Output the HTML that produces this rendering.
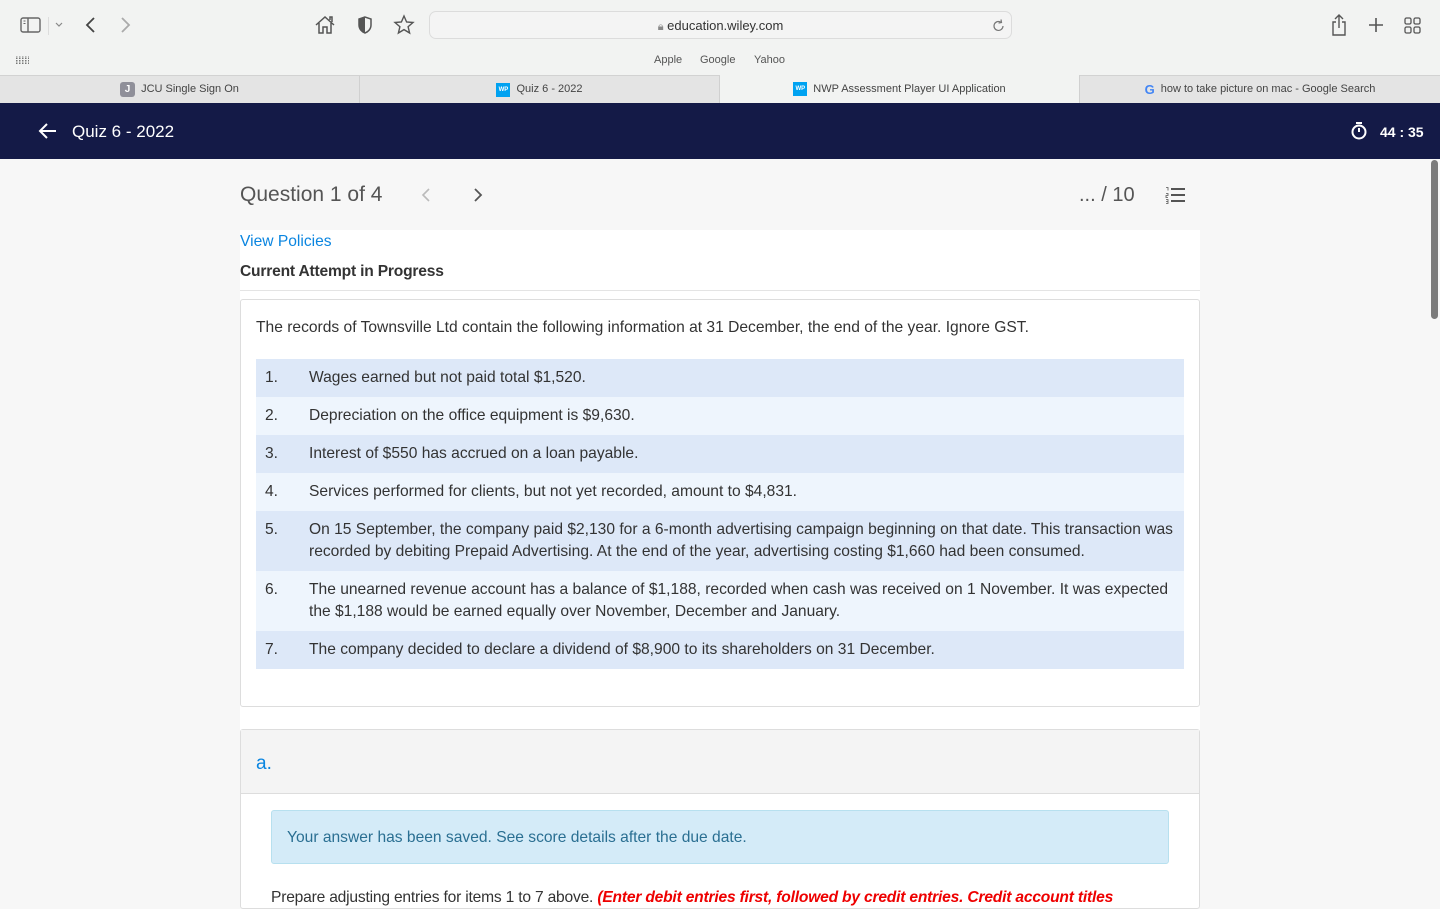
<!DOCTYPE html>
<html><head><meta charset="utf-8"><style>
*{margin:0;padding:0;box-sizing:border-box}
body{width:1440px;height:900px;overflow:hidden;background:#f7f7f7;font-family:"Liberation Sans",sans-serif;position:relative}
.abs{position:absolute}
.toolbar{left:0;top:0;width:1440px;height:75px;background:#f2f3f2}
.url{left:429px;top:11px;width:583px;height:28px;border:1px solid #dcdcdc;border-radius:7px;background:#f4f4f4;font-size:13px;color:#333;text-align:center;line-height:27px}
.bm{top:53px;font-size:11px;color:#555}
.tabs{left:0;top:75px;width:1440px;height:28px;background:#e4e4e4;border-top:1px solid #d2d2d2}
.tab{top:0;height:27px;font-size:11px;color:#444;line-height:27px;display:flex;align-items:center;justify-content:center;border-right:1px solid #d0d0d0}
.wp{display:inline-block;width:14px;height:14px;background:#00a2f1;color:#fff;font-size:6px;font-weight:bold;text-align:center;line-height:14px;margin-right:6px}
.nav{left:0;top:103px;width:1440px;height:56px;background:#141a47;color:#fff}
.q{font-size:15.6px;line-height:1.47;color:#333}
table{border-collapse:collapse;width:928px}
td{vertical-align:top;padding:8px 0 8px 0;font-size:15.6px;color:#333;line-height:22px;white-space:nowrap}
td.n{width:53px;padding-left:9px}
tr:nth-child(odd){background:#dde8f8}
tr:nth-child(even){background:#eef5fd}
</style></head><body>
<div class="abs toolbar"></div>
<svg class="abs" style="left:20px;top:16px" width="22" height="18" viewBox="0 0 22 18"><rect x="1" y="2" width="19" height="14" rx="2" fill="none" stroke="#666" stroke-width="1.4"/><line x1="8" y1="2" x2="8" y2="16" stroke="#666" stroke-width="1.4"/><line x1="3.5" y1="5" x2="5.5" y2="5" stroke="#666"/><line x1="3.5" y1="7.5" x2="5.5" y2="7.5" stroke="#666"/></svg>
<div class="abs" style="left:48px;top:17px;width:1px;height:18px;background:#ddd"></div>
<svg class="abs" style="left:54px;top:21px" width="10" height="8"><path d="M2 2l3 3 3-3" fill="none" stroke="#888" stroke-width="1.2"/></svg>
<svg class="abs" style="left:84px;top:16px" width="14" height="18"><path d="M10 2L3 9l7 7" fill="none" stroke="#444" stroke-width="1.8"/></svg>
<svg class="abs" style="left:119px;top:16px" width="14" height="18"><path d="M3 2l7 7-7 7" fill="none" stroke="#aaa" stroke-width="1.8"/></svg>
<svg class="abs" style="left:314px;top:15px" width="22" height="20"><path d="M2 10L11 2l9 8M5 8v10h4v-6h4v6h4V8M16 5V2h2v5" fill="none" stroke="#555" stroke-width="1.5"/></svg>
<svg class="abs" style="left:356px;top:15px" width="18" height="20"><path d="M9 2L3 4v6c0 4 3 7 6 8 3-1 6-4 6-8V4z" fill="none" stroke="#555" stroke-width="1.5"/><path d="M9 2L3 4v6c0 4 3 7 6 8z" fill="#555"/></svg>
<svg class="abs" style="left:393px;top:14px" width="22" height="22"><path d="M11 2l2.6 6 6.4.5-4.9 4.2 1.5 6.3L11 15.6 5.4 19l1.5-6.3L2 8.5 8.4 8z" fill="none" stroke="#555" stroke-width="1.4"/></svg>
<div class="abs url"><span style="color:#888;font-size:11px">🔒︎</span> education.wiley.com</div>
<svg class="abs" style="left:992px;top:18px" width="14" height="16"><path d="M11 8a4.5 4.5 0 1 1-2-3.8M9 1.5l.5 3-3 .5" fill="none" stroke="#777" stroke-width="1.2"/></svg>
<svg class="abs" style="left:1329px;top:13px" width="20" height="24"><path d="M7 9H4v13h12V9h-3M10 15V2M6 6l4-4 4 4" fill="none" stroke="#555" stroke-width="1.4"/></svg>
<svg class="abs" style="left:1367px;top:16px" width="18" height="18"><path d="M9 2v14M2 9h14" stroke="#555" stroke-width="1.6"/></svg>
<svg class="abs" style="left:1404px;top:17px" width="18" height="18"><g fill="none" stroke="#555" stroke-width="1.3"><rect x="1" y="1" width="6" height="6" rx="1.5"/><rect x="10" y="1" width="6" height="6" rx="1.5"/><rect x="1" y="10" width="6" height="6" rx="1.5"/><rect x="10" y="10" width="6" height="6" rx="1.5"/></g></svg>
<div class="abs" style="left:16px;top:56px;width:13px;height:8px;background:repeating-linear-gradient(90deg,#777 0 1.5px,transparent 1.5px 3px);-webkit-mask:repeating-linear-gradient(0deg,#000 0 1.5px,transparent 1.5px 2.5px)"></div>
<div class="abs bm" style="left:654px;top:54px">Apple</div>
<div class="abs bm" style="left:700px;top:54px">Google</div>
<div class="abs bm" style="left:754px;top:54px">Yahoo</div>
<div class="abs tabs">
 <div class="abs tab" style="left:0;width:360px"><span style="display:inline-block;width:15px;height:15px;border-radius:3px;background:#8f8f99;color:#fff;font-size:10px;font-weight:bold;text-align:center;line-height:15px;margin-right:6px">J</span>JCU Single Sign On</div>
 <div class="abs tab" style="left:360px;width:360px"><span class="wp">WP</span>Quiz 6 - 2022</div>
 <div class="abs tab" style="left:720px;width:360px;background:#f2f3f2;height:28px;top:-1px"><span class="wp">WP</span>NWP Assessment Player UI Application</div>
 <div class="abs tab" style="left:1080px;width:360px;border:none"><span style="font-weight:bold;color:#4285f4;font-size:13px;margin-right:6px">G</span>how to take picture on mac - Google Search</div>
</div>
<div class="abs nav">
 <svg class="abs" style="left:38px;top:19px" width="20" height="18"><path d="M18 9H3M9 2L2 9l7 7" fill="none" stroke="#fff" stroke-width="2"/></svg>
 <div class="abs" style="left:72px;top:19px;font-size:17px">Quiz 6 - 2022</div>
 <svg class="abs" style="left:1350px;top:18px" width="18" height="20"><circle cx="9" cy="11" r="6.5" fill="none" stroke="#fff" stroke-width="2"/><path d="M6 2h6M9 7v4" stroke="#fff" stroke-width="2"/></svg>
 <div class="abs" style="left:1380px;top:21px;font-size:14px;font-weight:bold">44 : 35</div>
</div>
<div class="abs" style="left:1431px;top:160px;width:7px;height:159px;border-radius:4px;background:#7b7b7b"></div>
<div class="abs" style="left:240px;top:183px;font-size:21px;color:#555">Question 1 of 4</div>
<svg class="abs" style="left:420px;top:187px" width="12" height="16"><path d="M9 2L3 8l6 6" fill="none" stroke="#bbb" stroke-width="1.6"/></svg>
<svg class="abs" style="left:472px;top:187px" width="12" height="16"><path d="M3 2l6 6-6 6" fill="none" stroke="#555" stroke-width="1.8"/></svg>
<div class="abs" style="left:1079px;top:184px;font-size:20px;color:#555">... / 10</div>
<svg class="abs" style="left:1165px;top:186px" width="22" height="18"><path d="M6 3h14M6 9h14M6 15h14" stroke="#555" stroke-width="2"/><path d="M1 1.5h2v3M1 7.5h2v2H1v2h2M1 13.5h2v4H1M1 15.5h2" fill="none" stroke="#555" stroke-width="0.8"/></svg>
<div class="abs" style="left:240px;top:230px;width:960px;height:670px;background:#fff"></div>
<div class="abs" style="left:240px;top:233px;font-size:15.6px;color:#0a85e0">View Policies</div>
<div class="abs" style="left:240px;top:263px;font-size:15.6px;font-weight:bold;color:#333;letter-spacing:-0.2px">Current Attempt in Progress</div>
<div class="abs" style="left:240px;top:290px;width:960px;height:1px;background:#e4e4e4"></div>
<div class="abs" style="left:240px;top:299px;width:960px;height:408px;border:1px solid #ddd;border-radius:3px;background:#fff"></div>
<div class="abs q" style="left:256px;top:317px">The records of Townsville Ltd contain the following information at 31 December, the end of the year. Ignore GST.</div>
<div class="abs" style="left:256px;top:359px">
<table>
<tr><td class="n">1.</td><td>Wages earned but not paid total $1,520.</td></tr>
<tr><td class="n">2.</td><td>Depreciation on the office equipment is $9,630.</td></tr>
<tr><td class="n">3.</td><td>Interest of $550 has accrued on a loan payable.</td></tr>
<tr><td class="n">4.</td><td>Services performed for clients, but not yet recorded, amount to $4,831.</td></tr>
<tr><td class="n">5.</td><td>On 15 September, the company paid $2,130 for a 6-month advertising campaign beginning on that date. This transaction was<br>recorded by debiting Prepaid Advertising. At the end of the year, advertising costing $1,660 had been consumed.</td></tr>
<tr><td class="n">6.</td><td>The unearned revenue account has a balance of $1,188, recorded when cash was received on 1 November. It was expected<br>the $1,188 would be earned equally over November, December and January.</td></tr>
<tr><td class="n">7.</td><td>The company decided to declare a dividend of $8,900 to its shareholders on 31 December.</td></tr>
</table></div>
<div class="abs" style="left:240px;top:729px;width:960px;height:180px;border:1px solid #ddd;border-radius:3px;background:#fff"></div>
<div class="abs" style="left:241px;top:730px;width:958px;height:64px;background:#f4f4f4;border-bottom:1px solid #ddd"></div>
<div class="abs" style="left:256px;top:753px;font-size:19px;color:#0a85e0">a.</div>
<div class="abs" style="left:271px;top:810px;width:898px;height:54px;background:#d4ebf8;border:1px solid #b7e0ef;border-radius:3px"></div>
<div class="abs" style="left:287px;top:829px;font-size:15.6px;color:#2a6f92">Your answer has been saved. See score details after the due date.</div>
<div class="abs" style="left:271px;top:889px;font-size:15.6px;color:#333;white-space:nowrap;letter-spacing:-0.2px">Prepare adjusting entries for items 1 to 7 above. <b style="color:#e00;font-style:italic">(Enter debit entries first, followed by credit entries. Credit account titles</b></div>
</body></html>
